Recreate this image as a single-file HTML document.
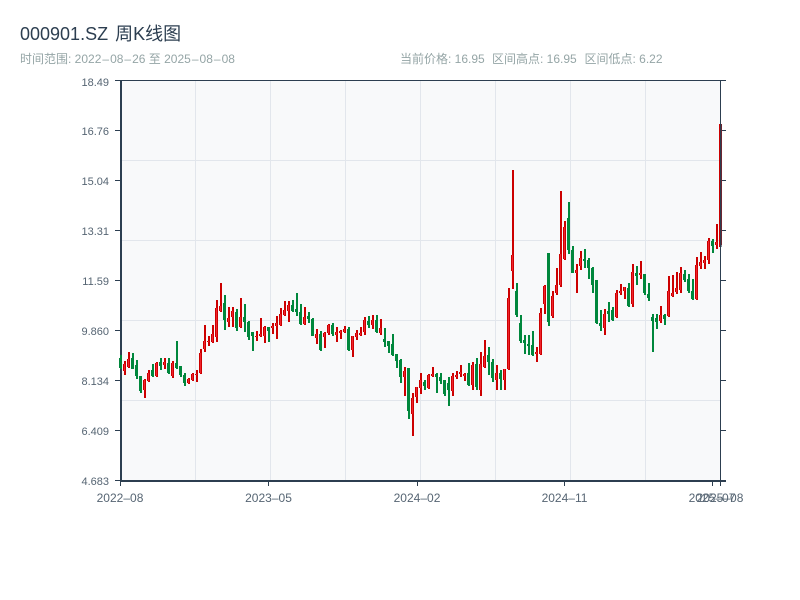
<!DOCTYPE html>
<html lang="zh">
<head>
<meta charset="utf-8">
<title>000901.SZ 周K线图</title>
<style>
html,body{margin:0;padding:0;background:#fff;width:800px;height:600px;overflow:hidden}
body{position:relative;font-family:"Liberation Sans","Noto Sans CJK SC",sans-serif}
.t{position:absolute;white-space:nowrap;line-height:1}
.title{left:20px;top:25px;font-size:18px;color:#2c3e50}
.title span{margin-left:2px}
.sub{top:53px;font-size:12px;color:#95a5a6}
.y{width:60px;left:49px;text-align:right;font-size:11px;color:#566573}
.x{width:70px;text-align:center;font-size:12px;color:#566573;top:492px}
.d{margin:0 1px}
.x .d{margin:0}
svg{position:absolute;left:0;top:0}
</style>
</head>
<body>
<div class="t title">000901.SZ <span>周K线图</span></div>
<div class="t sub" style="left:20px">时间范围: 2022<span class="d">–</span>08<span class="d">–</span>26 至 2025<span class="d">–</span>08<span class="d">–</span>08</div>
<div class="t sub" style="left:400px">当前价格: 16.95</div>
<div class="t sub" style="left:492px">区间高点: 16.95</div>
<div class="t sub" style="left:584.5px">区间低点: 6.22</div>

<svg width="800" height="600" viewBox="0 0 800 600">
<rect x="121" y="81" width="600" height="400" fill="#f8f9fa"/>
<path d="M195.5 81V480M270.5 81V480M345.5 81V480M420.5 81V480M495.5 81V480M570.5 81V480M645.5 81V480M121 160.5H720M121 240.5H720M121 320.5H720M121 400.5H720" stroke="#e2e6ec" stroke-width="1" fill="none"/>
<path d="M115 80.5H726M720.5 80V482M115 130.5H120M115 180.5H120M115 230.5H120M115 280.5H120M115 330.5H120M115 380.5H120M115 430.5H120M115 480.5H120M721 130.5H726M721 180.5H726M721 230.5H726M721 280.5H726M721 330.5H726M721 380.5H726M721 430.5H726M120.5 482V486M268.5 482V486M417.5 482V486M564.5 482V486M712.5 482V486M720.5 482V486" stroke="#2c3e50" stroke-width="1" fill="none"/>
<path d="M121 80V482M120 481H726" stroke="#2c3e50" stroke-width="2" fill="none"/>

<path fill="none" stroke="#00873c" stroke-width="2" d="M121 355V369M133 353V369M137 360V379M141 376V393M153 364V377M161 358V370M169 358V374M177 341V369M181 366V377M185 373V386M225 295V330M237 309V331M245 304V332M249 321V340M253 332V351M269 327V342M293 300V312M297 293V316M301 304V325M309 312V323M313 318V336M321 331V351M333 323V336M349 327V351M369 316V328M377 315V333M385 328V347M389 341V353M393 334V356M397 354V368M401 359V383M409 368V419M425 380V390M437 373V393M441 373V384M445 380V396M449 377V406M469 363V386M477 358V390M489 347V375M493 359V382M501 370V390M517 283V317M521 315V343M525 335V354M529 335V355M533 331V356M549 253V326M569 202V254M573 246V273M585 249V268M589 258V279M593 267V293M597 280V324M601 310V331M609 302V322M613 307V321M629 283V307M637 266V285M645 274V295M649 283V301M653 314V352M657 314V329M665 314V325M685 270V282M689 274V293M693 279V300M713 239V253"/>
<path fill="none" stroke="#00873c" stroke-width="3" d="M120.5 358V368M132.5 358V369M136.500 365V376M140.500 376V391M152.500 370V376M160.500 362V366M168.500 363V373M176.500 363V368M180.500 366V375M184.500 375V383M224.500 303V320M236.500 312V328M244.500 317V322M248.500 322V337M252.500 332V336M268.500 327V331M292.500 305V311M296.500 309V312M300.500 312V324M308.500 316V319M312.500 319V336M320.500 334V350M332.500 325V334M348.500 329V350M368.500 321V325M376.500 320V332M384.500 339V342M388.500 341V346M392.500 344V355M396.500 354V361M400.500 360V377M408.500 368V411M424.500 382V386M436.500 374V377M440.500 377V381M444.500 380V394M448.500 383V390M468.500 373V385M476.500 364V387M488.500 355V362M492.500 362V378M500.500 373V379M516.500 291V315M520.500 323V341M524.500 340V343M528.500 344V346M532.500 345V355M548.500 253V322M568.500 218V250M572.500 250V273M584.500 259V261M588.500 260V268M592.500 268V285M596.500 280V323M600.500 323V326M608.500 311V314M612.500 310V320M628.500 288V306M636.500 273V276M644.500 274V293M648.500 294V298M652.500 317V321M656.500 318V322M664.500 315V319M684.500 274V280M688.500 279V291M692.500 291V299M712.500 241V246"/>

<path fill="none" stroke="#cc0000" stroke-width="2" d="M125 361V375M129 352V368M145 379V398M149 370V382M157 362V377M165 358V369M173 361V378M189 378V384M193 373V381M197 370V382M201 349V374M205 325V352M209 336V346M213 325V343M217 300V342M221 283V312M229 307V327M233 307V327M241 298V328M257 331V341M261 318V337M265 326V343M273 323V334M277 316V339M281 308V326M285 301V316M289 301V322M305 307V325M317 329V344M325 332V348M329 324V335M337 327V342M341 330V339M345 326V333M353 336V357M357 330V340M361 327V336M365 317V335M373 315V329M381 319V335M405 367V396M413 393V436M417 387V403M421 373V394M429 374V389M433 367V377M453 373V396M457 371V379M461 365V377M465 373V381M473 362V390M481 352V396M485 340V368M497 365V390M505 369V390M509 288V370M513 170V289M537 347V362M541 308V355M545 285V314M553 291V318M557 268V295M561 191V287M565 221V260M577 264V293M581 251V270M605 309V335M617 290V318M621 284V295M625 287V299M633 264V307M641 261V279M661 306V323M669 276V317M673 275V297M677 272V294M681 267V293M697 257V300M701 252V269M705 256V269M709 238V264M717 224V249M720 124V247"/>
<defs><path id="rb" fill="none" d="M124.500 364V371M128.500 359V367M144.500 380V390M148.500 373V381M156.500 363V376M164.500 362V365M172.500 363V376M188.500 379V383M192.500 374V380M196.500 374V375M200.500 353V373M204.500 341V349M208.500 341V342M212.500 334V342M216.500 308V337M220.500 306V311M228.500 318V322M232.500 311V317M240.500 317V327M256.500 336V337M260.500 334V336M264.500 327V336M272.500 326V328M276.500 323V326M280.500 314V325M284.500 310V315M288.500 305V311M304.500 317V324M316.500 334V338M324.500 333V337M328.500 325V333M336.500 332V335M340.500 331V333M344.500 329V332M352.500 336V350M356.500 333V337M360.500 333V335M364.500 320V332M372.500 320V325M380.500 328V333M404.500 371V377M412.500 398V414M416.500 387V397M420.500 380V388M428.500 375V388M432.500 374V376M452.500 376V391M456.500 375V377M460.500 372V374M464.500 374V376M472.500 365V385M480.500 364V390M484.500 356V367M496.500 373V380M504.500 369V380M508.500 298V369M512.500 255V271M536.500 352V354M540.500 313V354M544.500 286V304M552.500 296V316M556.500 285V293M560.500 254V285M564.500 227V259M576.500 270V273M580.500 258V266M604.500 314V328M616.500 293V317M620.500 291V293M624.500 287V291M632.500 272V304M640.500 273V275M660.500 315V321M668.500 291V316M672.500 293V296M676.500 288V292M680.500 273V290M696.500 265V299M700.500 262V266M704.500 260V263M708.500 241V260M716.500 242V245M720.500 124V245"/></defs>
<use href="#rb" stroke="#cc0000" stroke-width="3"/>
<use href="#rb" stroke="#f0232d" stroke-width="1"/>
<path d="M720.5 124V247" stroke="#2c3e50" stroke-width="1" fill="none"/>
<path d="M721.500 124V247" stroke="#2c3e50" stroke-width="1" stroke-opacity=".6" fill="none"/>
</svg>

<div class="t y" style="top:78px">18.49</div>
<div class="t y" style="top:127px">16.76</div>
<div class="t y" style="top:177px">15.04</div>
<div class="t y" style="top:227px">13.31</div>
<div class="t y" style="top:277px">11.59</div>
<div class="t y" style="top:327px">9.860</div>
<div class="t y" style="top:377px">8.134</div>
<div class="t y" style="top:427px">6.409</div>
<div class="t y" style="top:477px">4.683</div>

<div class="t x" style="left:85px">2022<span class="d">–</span>08</div>
<div class="t x" style="left:233.500px">2023<span class="d">–</span>05</div>
<div class="t x" style="left:382px">2024<span class="d">–</span>02</div>
<div class="t x" style="left:529.500px">2024<span class="d">–</span>11</div>
<div class="t x" style="left:677px">2025<span class="d">–</span>07</div>
<div class="t x" style="left:685px">2025<span class="d">–</span>08</div>
</body>
</html>
